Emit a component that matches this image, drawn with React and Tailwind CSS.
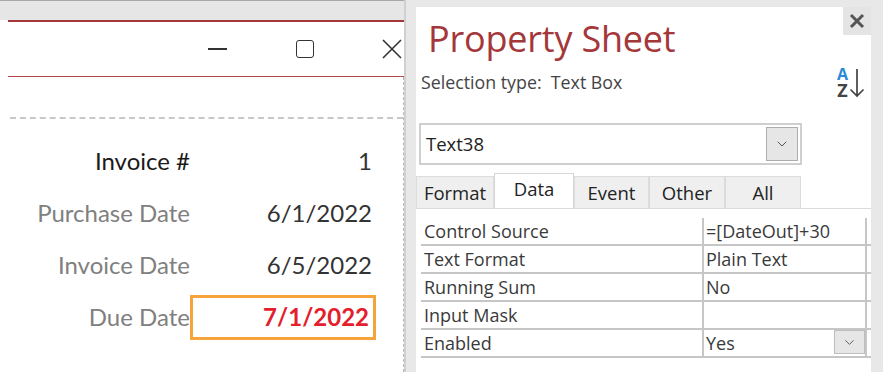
import { ChevronDown } from "lucide-react";

const fields = [
  { label: "Invoice #", value: "1", dark: true },
  { label: "Purchase Date", value: "6/1/2022" },
  { label: "Invoice Date", value: "6/5/2022" },
  { label: "Due Date", value: "7/1/2022", selected: true },
];

const tabs = ["Format", "Data", "Event", "Other", "All"];

const props = [
  { name: "Control Source", value: "=[DateOut]+30" },
  { name: "Text Format", value: "Plain Text" },
  { name: "Running Sum", value: "No" },
  { name: "Input Mask", value: "" },
  { name: "Enabled", value: "Yes", combo: true },
];

const FormPane = () => (
  <div className="w-[404px] shrink-0 bg-white flex flex-col">
    {/* ribbon strip */}
    <div className="h-[20px] bg-[#e6e6e6] border-t border-[#a8a8a8]" />
    {/* window caption */}
    <div className="ml-2 h-[57px] border-t-2 border-b border-t-[#a4373a] border-b-[#b04a4c] flex items-center">
      <div className="ml-auto flex items-center">
        <span className="w-[19px] h-[1.5px] bg-[#333]" />
        <span className="ml-[69px] w-[18px] h-[18px] border-[1.5px] border-[#333] rounded-[3px]" />
        <svg className="ml-[68px] mr-[2px]" width="20" height="20" viewBox="0 0 20 20">
          <path d="M1 1 L19 19 M19 1 L1 19" stroke="#333" strokeWidth="1.6" fill="none" />
        </svg>
      </div>
    </div>
    {/* detail section */}
    <div className="flex-1 border-r border-dashed border-r-[#b8b8b8]">
      <div className="ml-[10px] h-[42px] border-b-2 border-dashed border-[#c8c8c8]" />
      <div className="mt-[16px] flex flex-col font-['Lato',sans-serif] text-[24px]">
        {fields.map((f) => (
          <div key={f.label} className="h-[52px] flex items-center">
            <div className={`w-[190px] text-right ${f.dark ? "text-[#1a1a1a]" : "text-[#808080]"}`}>
              {f.label}
            </div>
            <div
              className={`w-[186px] h-[45px] flex items-center justify-end pr-[4px] ${
                f.selected
                  ? "border-[3px] border-[#f5a43c] text-[#e3202c] font-bold"
                  : "text-[#333]"
              }`}
            >
              {f.value}
            </div>
          </div>
        ))}
      </div>
    </div>
  </div>
);

// sort ascending button: A over Z with a down arrow
const SortIcon = () => (
  <div className="flex items-center font-['Open_Sans',sans-serif] font-bold">
    <div className="flex flex-col items-center">
      <span className="h-[15px] leading-[15px] text-[16px] text-[#2b8ad6]">A</span>
      <span className="h-[17px] leading-[17px] text-[18px] text-[#444]">Z</span>
    </div>
    <svg width="16" height="32" viewBox="0 0 16 32" className="ml-[1px]">
      <path d="M8 2 V29 M1.5 22.5 L8 29 L14.5 22.5" stroke="#444" strokeWidth="1.7" fill="none" />
    </svg>
  </div>
);

const PropertySheet = () => (
  <div className="flex-1 bg-[#e8e8e8] flex border-l-2 border-l-[#d0d0d0]">
    <div className="ml-[10px] mt-[7px] w-[455px] bg-white flex flex-col font-['Open_Sans',sans-serif] text-[#333]">
      <div className="flex items-start justify-between">
        <div className="pl-[12px] pt-[9px] text-[36px] leading-[46px] text-[#a4373a] tracking-[-0.2px]">
          Property Sheet
        </div>
        <div className="w-[28px] h-[28px] bg-[#e4e4e4] flex items-center justify-center">
          <svg width="16" height="16" viewBox="0 0 16 16">
            <path d="M2 2 L14 14 M14 2 L2 14" stroke="#555" strokeWidth="3" fill="none" />
          </svg>
        </div>
      </div>
      <div className="mt-[5px] flex items-start justify-between pr-[6px]">
        <div className="pl-[5px] pt-[2px] text-[17.8px] text-[#444]">
          Selection type:&nbsp; Text Box
        </div>
        <SortIcon />
      </div>
      <div className="mt-[24px] ml-[3px] w-[383px] h-[42px] border-2 border-[#cfcfcf] flex items-center">
        <span className="pl-[5px] text-[18.5px] text-[#222] flex-1">Text38</span>
        <div className="mr-[2px] w-[32px] h-[34px] bg-[#e6e6e6] border border-[#adadad] flex items-center justify-center">
          <ChevronDown size={16} strokeWidth={1.5} color="#555" />
        </div>
      </div>
      <div className="mt-[8px] flex items-end text-[18.5px] text-[#222] h-[35px]">
        {tabs.map((t) =>
          t === "Data" ? (
            <div
              key={t}
              className="w-[80px] h-[35px] bg-white border border-b-0 border-[#d6d6d6] flex items-start justify-center pt-[1px]"
            >
              {t}
            </div>
          ) : (
            <div
              key={t}
              className={`h-[32px] bg-[#efefef] border border-b-0 border-[#dcdcdc] flex items-center justify-center ${
                t === "Format" ? "w-[78px]" : t === "Event" ? "w-[75px]" : "w-[76px]"
              }`}
            >
              {t}
            </div>
          )
        )}
      </div>
      <div className="flex-1 border-t border-[#dcdcdc] pt-[9px] pl-[5px] text-[18px] text-[#3a3a3a]">
        {props.map((p) => (
          <div key={p.name} className="flex h-[28px] border-b-2 border-[#c6c6c6]">
            <div className="w-[281px] pl-[3px] leading-[26px]">{p.name}</div>
            <div className="w-[165px] border-l-2 border-r-2 border-[#c6c6c6] pl-[2px] leading-[26px] flex">
              <span className="flex-1">{p.value}</span>
              {p.combo && (
                <span className="w-[31px] h-[24px] bg-[#e6e6e6] border border-[#bdbdbd] flex items-center justify-center">
                  <ChevronDown size={15} strokeWidth={1.5} color="#555" />
                </span>
              )}
            </div>
          </div>
        ))}
      </div>
    </div>
  </div>
);

export default function App() {
  return (
    <div className="w-[883px] h-[372px] overflow-hidden flex bg-white">
      <FormPane />
      <PropertySheet />
    </div>
  );
}
